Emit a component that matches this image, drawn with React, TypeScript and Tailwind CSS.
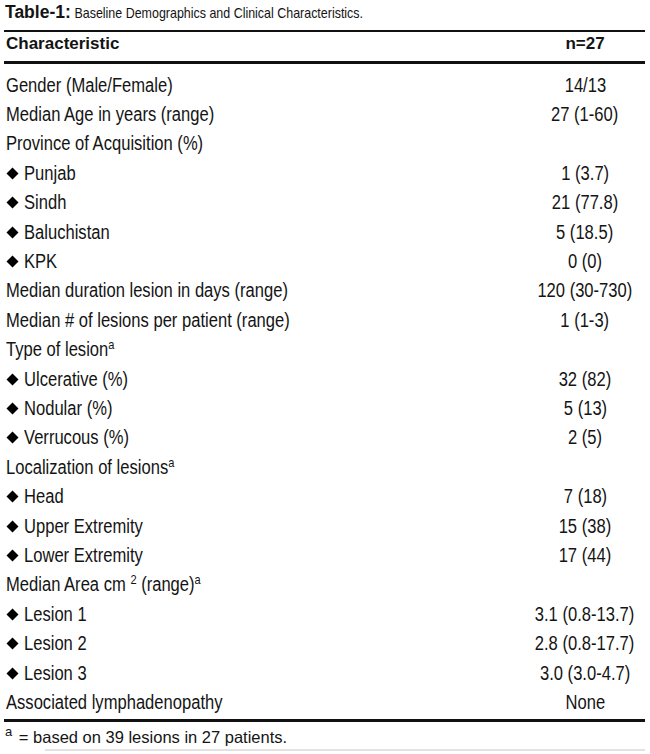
import React from "react";

type Row = { label: React.ReactNode; value?: string; bullet?: boolean };

const Sup = ({ children }: { children: React.ReactNode }) => (
  <sup className="text-[13px] top-[-0.55em]">{children}</sup>
);

const rows: Row[] = [
  { label: "Gender (Male/Female)", value: "14/13" },
  { label: "Median Age in years (range)", value: "27 (1-60)" },
  { label: "Province of Acquisition (%)" },
  { label: "Punjab", value: "1 (3.7)", bullet: true },
  { label: "Sindh", value: "21 (77.8)", bullet: true },
  { label: "Baluchistan", value: "5 (18.5)", bullet: true },
  { label: "KPK", value: "0 (0)", bullet: true },
  { label: "Median duration lesion in days (range)", value: "120 (30-730)" },
  { label: "Median # of lesions per patient (range)", value: "1 (1-3)" },
  {
    label: (
      <>
        Type of lesion<Sup>a</Sup>
      </>
    ),
  },
  { label: "Ulcerative (%)", value: "32 (82)", bullet: true },
  { label: "Nodular (%)", value: "5 (13)", bullet: true },
  { label: "Verrucous (%)", value: "2 (5)", bullet: true },
  {
    label: (
      <>
        Localization of lesions<Sup>a</Sup>
      </>
    ),
  },
  { label: "Head", value: "7 (18)", bullet: true },
  { label: "Upper Extremity", value: "15 (38)", bullet: true },
  { label: "Lower Extremity", value: "17 (44)", bullet: true },
  {
    label: (
      <>
        Median Area cm <Sup>2</Sup> (range)<Sup>a</Sup>
      </>
    ),
  },
  { label: "Lesion 1", value: "3.1 (0.8-13.7)", bullet: true },
  { label: "Lesion 2", value: "2.8 (0.8-17.7)", bullet: true },
  { label: "Lesion 3", value: "3.0 (3.0-4.7)", bullet: true },
  { label: "Associated lymphadenopathy", value: "None" },
];

const Diamond = () => (
  <svg
    width="13"
    height="13"
    viewBox="0 0 13 13"
    className="inline-block align-[0px] mr-[5px]"
  >
    <polygon points="6.5,0.5 12.5,6.5 6.5,12.5 0.5,6.5" fill="#000" />
  </svg>
);

export default function App() {
  return (
    <div
      className="w-[650px] h-[754px] bg-white pl-[4px] pr-[5px] text-[#141414] overflow-hidden"
      style={{ fontFamily: '"Liberation Sans", Arial, sans-serif' }}
    >
      <div className="h-[30px] pl-[1px] leading-[24px] whitespace-nowrap">
        <span className="font-bold text-[17.5px]">Table-1:</span>
        <span className="inline-block origin-left scale-x-[0.83] text-[15px]">
          &nbsp;Baseline Demographics and Clinical Characteristics.
        </span>
      </div>
      <div className="border-t-2 border-b-[3px] border-[#111] h-[34px] flex text-[17px] font-bold leading-[24px]">
        <div className="flex-1 pl-[2px]">Characteristic</div>
        <div className="w-[120px] text-center">n=27</div>
      </div>
      <div className="pt-[6.7px] pb-[1.5px] border-b-[3px] border-[#111]">
        {rows.map((r, i) => (
          <div key={i} className="flex h-[29.4px] leading-[29.4px] text-[19.5px] whitespace-nowrap">
            <div className="flex-1 pl-[2px]">
              {r.bullet && <Diamond />}
              <span className="inline-block origin-left scale-x-[0.85]">{r.label}</span>
            </div>
            <div className="w-[120px] text-center">
              <span className="inline-block origin-center scale-x-[0.85]">{r.value ?? ""}</span>
            </div>
          </div>
        ))}
      </div>
      <div className="pl-[1px] leading-[22px] pt-[4px] h-[27px] whitespace-nowrap">
        <Sup>a</Sup>
        <span className="text-[16.5px] ml-[2px]"> = based on 39 lesions in 27 patients.</span>
      </div>
      <div className="ml-[41px] h-[2px] bg-[#e2e2e2]" />
    </div>
  );
}
